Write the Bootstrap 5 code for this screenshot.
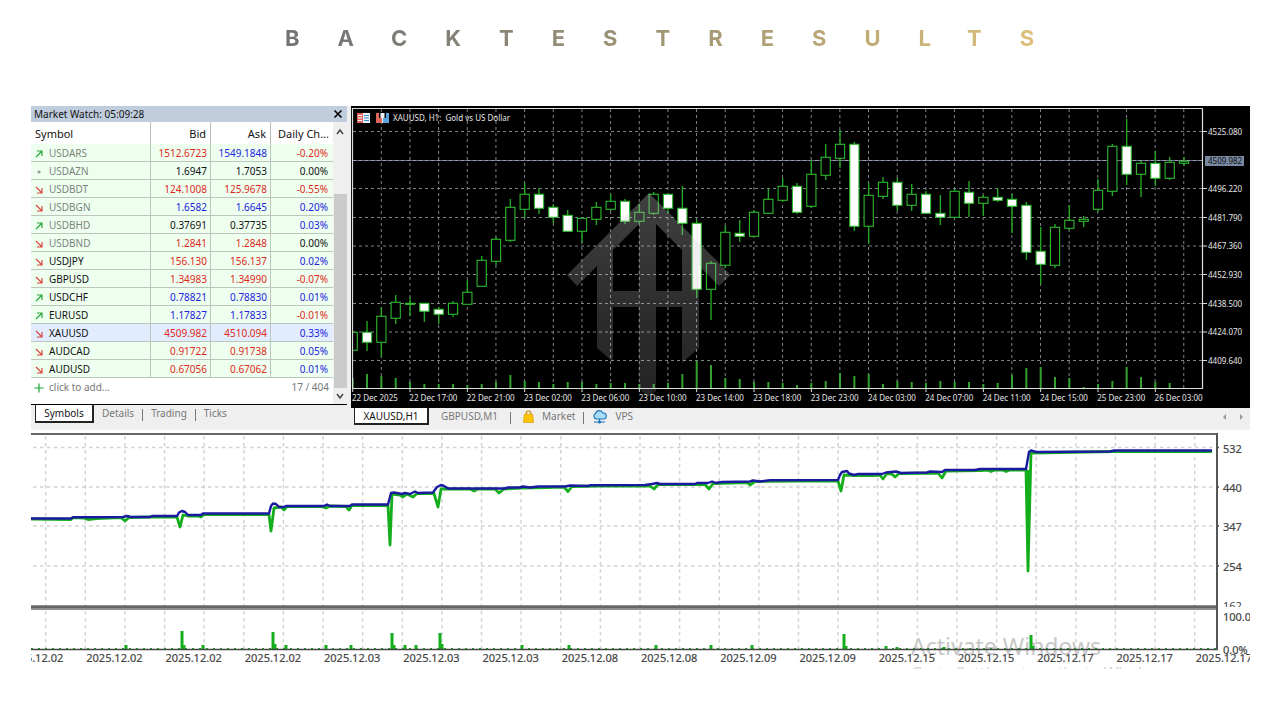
<!DOCTYPE html>
<html lang="en">
<head>
<meta charset="utf-8">
<meta name="viewport" content="width=device-width, initial-scale=1">
<title>Backtest Results</title>
<link href="https://cdn.jsdelivr.net/npm/bootstrap@5.3.0/dist/css/bootstrap.min.css" rel="stylesheet">
<style>
body { background: #fff; font-family: "Noto Sans", "Open Sans", sans-serif; color: #111; }
.page { padding: 0 30px 24px 31px; }
.headline { font: 700 22px/28px Inter, sans-serif; letter-spacing: 38px; padding: 24px 0 54px 76px; overflow-wrap: anywhere; }
.headline span { background: linear-gradient(90deg, #737373 0%, #7b7a76 12%, #a89b75 55%, #e2c47c 100%); -webkit-background-clip: text; background-clip: text; color: transparent; }
.terminal { background: #efefef; }
.watch { flex: 0 0 320px; font-size: 10px; line-height: 16px; }
.watch-title { height: 16px; background: #bfcddd; font-size: 10px; padding: 0 3px; width: 316px; }
.plain-btn { border: 0; background: none; padding: 0; color: inherit; line-height: 16px; }
.watch-body { width: 316px; background: #fff; }
.quotes { width: 302px; table-layout: fixed; border-collapse: separate; border-spacing: 0; }
.quotes th { height: 22px; font-weight: 400; font-size: 11px; line-height: 16px; padding: 4px 4px 2px; border-right: 1px solid #bcbcbc; white-space: nowrap; }
.quotes th:last-child, .quotes tbody td:last-child { border-right: 0; }
.quotes tbody td { height: 18px; line-height: 15px; padding: 2px 3px 0; background: #eefff0; border-right: 1px solid #bcc6bd; border-bottom: 1px solid #bcc6bd; text-align: right; }
.quotes tbody td:first-child { text-align: left; padding-left: 4px; }
.quotes tbody td:last-child { padding-right: 5px; }
.quotes svg { width: 8px; height: 8px; margin-right: 6px; vertical-align: -1px; }
.quotes .idle td:first-child { color: #7c847d; }
.quotes .chosen td { background: #e1edff; }
.quotes tfoot td { height: 26px; padding: 0 4px 8px; color: #777; white-space: nowrap; }
.dn { color: #e02a20; } .up { color: #2222dd; }
.scroller { width: 14px; background: #efefef; color: #444; }
.thumb { width: 13px; height: 194px; background: #cbcbcb; }
.tabs { font-size: 10px; line-height: 16px; color: #777; }
.tab-on { background: #fff; color: #111; border: 1px solid #222; border-top: 0; border-right-width: 2px; border-bottom-width: 2px; height: 18px; }
.watch-tabs { width: 316px; border-top: 1px solid #000; height: 26px; padding-left: 4px; }
.watch-tabs .tab-on { width: 59px; }
.divider { width: 1px; height: 12px; background: #777; }
.chart-tabs { height: 22px; padding: 0 5px 0 3px; }
.chart-tabs .tab-on { width: 75px; height: 17px; }
.price { background: #000; }
svg.plot { display: block; width: 100%; height: auto; }
svg.plot text { font-family: "Noto Sans", "Open Sans", sans-serif; white-space: pre; }
</style>
</head>
<body>
<main class="page">
  <h1 class="headline text-center mb-0"><span>BACKTESTRESULTS</span></h1>

  <section class="terminal d-flex flex-column flex-lg-row">
    <div class="watch">
      <div class="watch-title d-flex justify-content-between align-items-center">
        <span>Market Watch: 05:09:28</span>
        <button class="plain-btn d-flex" type="button" aria-label="Close"><svg width="12" height="12" viewBox="0 0 12 12"><path d="M2.5 2.5l7 7M9.500 2.500l-7 7" stroke="#000" stroke-width="1.600"/></svg></button>
      </div>
      <div class="watch-body d-flex">
        <table class="quotes">
          <colgroup><col style="width:120px"><col style="width:60px"><col style="width:60px"><col style="width:62px"></colgroup>
          <thead><tr><th>Symbol</th><th class="text-end">Bid</th><th class="text-end">Ask</th><th class="text-end">Daily Ch...</th></tr></thead>
          <tbody id="quotes"></tbody>
          <tfoot><tr><td><svg viewBox="0 0 8 8" style="overflow:visible"><path d="M-.5 4h9M4-.5v9" stroke="#1fa42f" stroke-width="1.200"/></svg>click to add...</td><td colspan="3" class="text-end">17 / 404</td></tr></tfoot>
        </table>
        <div class="scroller d-flex flex-column align-items-center">
          <svg width="10" height="22" viewBox="0 0 10 22"><path d="M2 12l3-4 3 4" fill="none" stroke="currentColor" stroke-width="1.500"/></svg>
          <div class="flex-grow-1"></div>
          <div class="thumb"></div>
          <svg width="10" height="16" viewBox="0 0 10 16"><path d="M2 6l3 4 3-4" fill="none" stroke="currentColor" stroke-width="1.500"/></svg>
        </div>
      </div>
      <div class="watch-tabs tabs d-flex align-items-start">
        <button class="plain-btn tab-on" type="button">Symbols</button>
        <button class="plain-btn ms-2" type="button">Details</button>
        <span class="divider ms-2 mt-1"></span>
        <button class="plain-btn ms-2" type="button">Trading</button>
        <span class="divider ms-2 mt-1"></span>
        <button class="plain-btn ms-2" type="button">Ticks</button>
      </div>
    </div>

    <div class="flex-grow-1" style="min-width:0">
      <div class="price"><svg id="price" class="plot" viewBox="351 106 899 302" role="img" aria-label="XAUUSD hourly candles"></svg></div>
      <div class="chart-tabs tabs d-flex align-items-start">
        <button class="plain-btn tab-on" type="button">XAUUSD,H1</button>
        <button class="plain-btn ms-2 px-1" type="button">GBPUSD,M1</button>
        <span class="divider mx-2 mt-1"></span>
        <button class="plain-btn d-flex align-items-center ms-1" type="button"><svg class="me-2" width="11" height="16" viewBox="0 0 12 16"><path d="M3.500 7V5a2.500 2.500 0 0 1 5 0v2" fill="none" stroke="#c98a00" stroke-width="1.200"/><path d="M1.500 6h9l1 9H.5z" fill="#fcc404" stroke="#dba000" stroke-width=".8"/></svg>Market</button>
        <span class="divider mx-2 mt-1"></span>
        <button class="plain-btn d-flex align-items-center" type="button"><svg class="me-2" width="15" height="16" viewBox="0 0 15 16"><path d="M4 11a3 3 0 0 1-.5-5.500 4 4 0 0 1 7.500-.5A3 3 0 0 1 11.500 11z" fill="#a9dcfa" stroke="#1972b8" stroke-width="1.100"/><path d="M7.500 11v2M2 14h11" stroke="#1972b8" stroke-width="1.200"/><circle cx="7.500" cy="14" r="1.500" fill="#1972b8"/></svg>VPS</button>
        <button class="plain-btn ms-auto" type="button" aria-label="Scroll left"><svg width="8" height="8" viewBox="0 0 8 8"><path d="M5 1v6L2 4z" fill="#999"/></svg></button>
        <button class="plain-btn ms-2" type="button" aria-label="Scroll right"><svg width="8" height="8" viewBox="0 0 8 8"><path d="M3 1v6l3-3z" fill="#999"/></svg></button>
      </div>
    </div>
  </section>

  <section><svg id="equity" class="plot" viewBox="31 430 1219 239" role="img" aria-label="Balance and equity"></svg></section>
</main>

<script src="https://cdn.jsdelivr.net/npm/bootstrap@5.3.0/dist/js/bootstrap.bundle.min.js"></script>
<script>
// Market watch rows: direction, symbol, bid, ask, change, quote colour class(es), change colour class
const quotes = [
  ['u','USDARS','1512.6723','1549.1848','-0.20%','dn','up','dn'],
  ['-','USDAZN','1.6947','1.7053','0.00%','','',''],
  ['d','USDBDT','124.1008','125.9678','-0.55%','dn','dn','dn'],
  ['d','USDBGN','1.6582','1.6645','0.20%','up','up','up'],
  ['u','USDBHD','0.37691','0.37735','0.03%','','','up'],
  ['d','USDBND','1.2841','1.2848','0.00%','dn','dn',''],
  ['d','USDJPY','156.130','156.137','0.02%','dn','dn','up'],
  ['d','GBPUSD','1.34983','1.34990','-0.07%','dn','dn','dn'],
  ['u','USDCHF','0.78821','0.78830','0.01%','up','up','up'],
  ['u','EURUSD','1.17827','1.17833','-0.01%','up','up','dn'],
  ['d','XAUUSD','4509.982','4510.094','0.33%','dn','dn','up'],
  ['d','AUDCAD','0.91722','0.91738','0.05%','dn','dn','up'],
  ['d','AUDUSD','0.67056','0.67062','0.01%','dn','dn','up']
];
const marks = {
  u: '<path d="M1 7l6-6M2 1h5v5" fill="none" stroke="#2aa63a" stroke-width="1.2"/>',
  d: '<path d="M1 1l6 6M7 2v5H2" fill="none" stroke="#d9463c" stroke-width="1.2"/>',
  '-': '<circle cx="4" cy="4" r="1.6" fill="#999"/>'
};
document.getElementById('quotes').innerHTML = quotes.map((q, i) =>
  `<tr class="${i < 6 ? 'idle' : q[1] === 'XAUUSD' ? 'chosen' : ''}"><td><svg viewBox="0 0 8 8">${marks[q[0]]}</svg>${q[1]}</td>` +
  `<td class="${q[5]}">${q[2]}</td><td class="${q[6]}">${q[3]}</td><td class="${q[7]}">${q[4]}</td></tr>`).join('');

const line = (x1, y1, x2, y2, c, w = 1, extra = '') => `<line x1="${x1}" y1="${y1}" x2="${x2}" y2="${y2}" stroke="${c}" stroke-width="${w}" ${extra}/>`;
const label = (x, y, s, size, c, extra = '') => `<text x="${x}" y="${y}" font-size="${size}" fill="${c}" ${extra}>${s}</text>`;

// Candles: high, body top, body bottom, low, falling(1) / rising(0), volume top
const candles = [
[332,332,350,350,0,378],[321,332,342,351,1,374],[307,316,342,357,0,376],[295,302,318,324,0,378],[297,303,304,316,1,382],[303,303,311,322,1,384],[307,309,314,324,1,384],[301,303,314,317,0,384],[280,292,304,304,0,385],[256,260,286,286,0,384],[237,239,261,265,0,382],[199,207,240,242,0,375],
[183,194,209,218,0,381],[188,194,208,214,1,382],[204,207,217,223,1,384],[210,215,231,231,1,382],[218,218,231,243,0,382],[202,207,219,225,0,384],[194,201,209,211,0,383],[199,201,221,224,1,383],[204,212,221,223,0,384],[192,194,213,215,0,384],[194,194,208,213,1,383],[186,208,223,235,1,374],
[220,223,289,297,1,361],[261,263,289,320,0,365],[226,232,265,268,0,378],[220,233,236,242,1,379],[210,212,236,236,0,382],[189,199,213,213,0,382],[178,186,200,202,0,383],[183,186,212,214,1,385],[160,174,206,208,0,383],[144,157,175,180,0,381],[130,144,158,168,0,373],[142,144,226,231,1,376],
[183,195,226,244,0,374],[177,182,196,199,0,384],[178,182,205,211,1,381],[184,194,205,211,0,382],[191,194,213,214,1,383],[195,213,217,225,1,381],[189,191,217,217,0,382],[181,192,203,217,1,382],[195,197,203,216,0,384],[188,197,200,202,1,383],[194,199,206,233,1,375],[202,205,252,260,1,368],
[227,251,264,284,1,367],[224,227,265,268,0,377],[205,220,228,230,0,378],[216,219,221,227,0,387],[179,190,209,212,0,384],[144,146,191,196,0,381],[119,146,174,185,1,367],[161,163,174,197,0,377],[151,163,178,186,1,382],[157,162,178,180,0,383],[157,161,163,166,0,389]];
const ys = [131.5,160.5,188.5,217.5,246,274.5,303.5,332,360.5];
const prices = ['4525.080',null,'4496.220','4481.790','4467.360','4452.930','4438.500','4424.070','4409.640'];
const times = ['22 Dec 2025','22 Dec 17:00','22 Dec 21:00','23 Dec 02:00','23 Dec 06:00','23 Dec 10:00','23 Dec 14:00','23 Dec 18:00','23 Dec 23:00','24 Dec 03:00','24 Dec 07:00','24 Dec 11:00','24 Dec 15:00','25 Dec 23:00','26 Dec 03:00'];
let s = '<defs><linearGradient id="wm" x1="0" y1="0" x2="0" y2="1"><stop offset="0" stop-color="#c8c8cc" stop-opacity=".32"/><stop offset=".6" stop-color="#c8c8cc" stop-opacity=".22"/><stop offset="1" stop-color="#c8c8cc" stop-opacity=".18"/></linearGradient><clipPath id="pc"><rect x="353" y="109" width="850" height="280"/></clipPath></defs>';
for (let k = 0; k < 29; k++) s += line(381.3 + 28.66 * k, 109, 381.3 + 28.66 * k, 389, '#7f8587', 1, 'stroke-dasharray="3 3"');
ys.forEach((y, i) => {
  s += line(353, y, 1203, y, '#7f8587', 1, 'stroke-dasharray="3 3"');
  if (prices[i]) s += line(1203, y, 1207, y, '#ddd') + label(1208, y + 3, prices[i], 8, '#e6e6e6');
});
s += line(353, 160.5, 1203, 160.5, '#66708a', 1) + line(353, 160.5, 1203, 160.5, '#9aa0ac', 1, 'stroke-dasharray="3 3"');
s += '<g clip-path="url(#pc)">';
candles.forEach((c, i) => {
  const x = 352.7 + 14.333 * i;
  s += line(x, c[5], x, 389, '#33a02f', 2) + line(x, c[0], x, c[1], '#22a522', 1.4) + line(x, c[2], x, c[3], '#22a522', 1.4);
  s += `<rect x="${x - 4.6}" y="${c[1] + .3}" width="9.2" height="${Math.max(c[2] - c[1], 1)}" fill="${c[4] ? '#fff' : '#000'}" stroke="#2db92d" stroke-width="1.1"/>`;
});
s += '</g><path fill="url(#wm)" fill-rule="evenodd" d="M567 275L649 193L731 275L719 286L699 266V348L682 363V307H656V391L648 397L639 389V307H613V362L597 348V266L577 286ZM613 250L639 224V291H613ZM656 224L682 250V291H656Z"/>';
s += '<path d="M352.500 389V108.500H1202.500V388.500H352.500" fill="none" stroke="#dcdcdc" stroke-width="1.200"/>';
times.forEach((t, i) => { s += line(352.7 + 57.33 * i, 389, 352.7 + 57.33 * i, 392, '#ddd') + label(352 + 57.33 * i, 401, t, 8, '#e6e6e6'); });
s += '<rect x="1205" y="156" width="39" height="10" fill="#7888a0"/>' + label(1208, 164, '4509.982', 8, '#111');
s += '<rect x="357" y="113" width="13" height="10" fill="#e8f1fa"/><path d="M357 113h6v10h-6z" fill="#e0635c"/><path d="M358 115.500h4M358 118h4M358 120.500h4" stroke="#fff"/><path d="M364 115.500h5M364 118h5M364 120.500h5" stroke="#3b87c8"/>';
s += '<path d="M376 113h12v10h-12z" fill="#f4f4f4"/><path d="M376 113h3v5h3v5h-6z" fill="#e0635c"/><path d="M389 113h-3v5h-3v5h6z" fill="#5aa3dc"/><path d="M379 113h1.500v5h-1.500zM384.500 113h1.500v5h-1.500z" fill="#000"/>';
s += label(393, 121, 'XAUUSD, H1:  Gold vs US Dollar', 8, '#e6e6e6');
document.getElementById('price').innerHTML = s;

// Tester graph: balance steps and equity dips
const balance = '31,518.5 71,518.5 73,517.3 123,517 127,516 131,517 150,517 152,516 177,516 179,512.500 182,511 185,512 188,515 201,515 203,513.5 269,513.5 271,506 273,503.500 276,504 279,507 284,507 286,506 324,506 327,504.5 330,506 350,506 352,504.5 388,504.5 391,493 394,492.5 402,494 405,493 410,494 415,491.5 418,493 433,492.5 437,487 441,485 444,486 448,488.500 505,488.5 508,487.500 520,487.5 523,486.5 530,487.5 538,486.5 565,486.5 570,485.5 588,486 590,485.300 645,485 652,484 657,483 660,484 695,484 697,483 708,483 712,481.5 716,483 722,482 750,481.5 753,480.5 760,481.5 770,480.300 838,480 840,475 842,472 847,471 849,473.5 854,475 858,474 882,474 886,472.5 896,471.5 901,473 927,472.5 930,471.5 942,472 945,470 975,470 980,469 1026,469 1029,452 1031,450.500 1036,452 1110,451.5 1114,450.5 1212,450.5';
const equity = '31,519 71,519.5 73,517.500 84,518 88,519.500 96,518.500 121,517.500 125,521 129,517.500 150,517 160,517 177,517 180,527 183,515 188,516 198,516 201,517 204,514.500 269,514.500 271,531 274,508 281,507 284,510 287,506.500 322,506.500 326,508 330,506 346,506.500 349,510 352,505.500 388,505.500 390,545 392,494 400,495 403,497 407,494 413,497 417,493.500 434,493.500 438,507 441,489 470,489 474,491 478,489 495,489 499,493 504,489 520,488 545,487.500 564,487 568,491.500 572,486.500 600,486 650,486 654,489 658,484.500 705,484.500 709,489 713,483.500 747,482.500 750,485 755,481.500 800,481 838,481 841,491 844,475 855,475.500 873,475.500 880,475 883,479 887,473.500 892,474 895,477 899,473.500 938,473 942,478 946,471 980,470.500 988,470 991,471.500 995,470 1003,470 1006,471.500 1010,470 1026,470 1028,571 1031,453 1114,451.500 1212,451.500';
const bars = [[126,645],[182,631],[184,645],[203,645],[273,632],[275,644],[286,645],[326,645],[351,645],[392,633],[394,645],[405,645],[416,645],[440,633],[442,644],[522,645],[569,645],[656,645],[711,645],[752,645],[844,634],[846,646],[886,646],[897,647],[944,647],[1031,635],[1033,646]];
const days = ['2025.12.02','2025.12.02','2025.12.02','2025.12.02','2025.12.03','2025.12.03','2025.12.03','2025.12.08','2025.12.08','2025.12.09','2025.12.09','2025.12.15','2025.12.15','2025.12.17','2025.12.17','2025.12.17'];
const bold = 'stroke="#444" stroke-width=".2"';
let e = '<rect x="31" y="430" width="1219" height="239" fill="#fff"/>';
for (let k = 0; k < 30; k++) e += line(45.7 + 39.62 * k, 436, 45.7 + 39.62 * k, 649, '#d2d2d2', 1.5, 'stroke-dasharray="3.5 3.5"');
[447.5, 487, 526, 566].forEach((y, i) => { e += line(33, y, 1216, y, '#d2d2d2', 1.5, 'stroke-dasharray="3.5 3.5"') + line(1216, y, 1219, y, '#444', 1.5) + label(1223, y + 5, ['532','440','347','254'][i], 11, '#444', bold); });
e += label(1223, 610, '162', 11, '#444') + '<rect x="1219" y="607" width="31" height="5" fill="#fff"/>';
e += label(911, 655, 'Activate Windows', 23, '#c8c8c8') + label(911, 679, 'Go to Settings to activate Windows.', 16, '#d4d4d4');
e += `<polyline points="${equity}" fill="none" stroke="#14ae1c" stroke-width="2.8" stroke-linejoin="round"/><path d="M1029 470V510" stroke="#14ae1c" stroke-width="4"/><polyline points="${balance}" fill="none" stroke="#1a1aa0" stroke-width="2.4" stroke-linejoin="round"/>`;
e += line(31, 648.5, 1216, 648.5, '#14ae1c', 1, 'stroke-dasharray="2 5"');
bars.forEach(b => { e += line(b[0], b[1], b[0], 649, '#14ae1c', 3); });
e += line(31, 434, 1218, 434, '#666', 2) + '<rect x="31" y="605" width="1187" height="5" fill="#8f8f8f"/>' + line(31, 607, 1218, 607, '#666', 2) + line(31, 649.5, 1218, 649.5, '#444', 1.5) + line(1217, 433, 1217, 650, '#555', 2);
e += label(1223, 621, '100.0', 11, '#444', bold) + label(1223, 654, '0.0%', 11, '#444', bold);
days.forEach((d, i) => { e += label(7 + 79.25 * i, 662, d, 11, '#444', bold); });
document.getElementById('equity').innerHTML = e;
</script>
</body>
</html>
